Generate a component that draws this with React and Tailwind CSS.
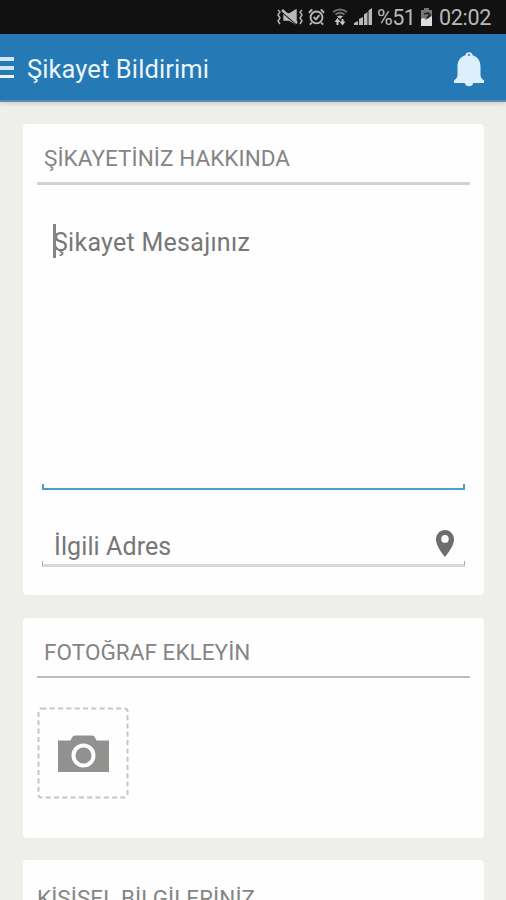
import React, { useState } from "react";

const App = () => {
  const [message, setMessage] = useState("");
  const [address, setAddress] = useState("");

  return (
    <div className="h-[900px] w-[506px] overflow-hidden bg-[#eeeeea] font-['Roboto',sans-serif]">
      <StatusBar />
      <Header />

      <main className="flex flex-col gap-[22px] pt-[22px] pr-[22px] pl-[23px]">
        {/* Complaint details */}
        <section className="h-[471px] rounded-[4px] bg-[#fefefe] px-[14px] pt-[10px]">
          <SectionTitle className="border-b-[3px] border-[#d2d2d2]">ŞİKAYETİNİZ HAKKINDA</SectionTitle>

          <div className="relative mx-[5px] mt-[20px] flex h-[285px] flex-col">
            <textarea
              value={message}
              placeholder="Şikayet Mesajınız"
              onChange={(e) => setMessage(e.target.value)}
              className="w-full flex-1 resize-none px-[11px] pt-[21px] text-[25px] leading-[34px] tracking-[0.27px] text-[#666] outline-none placeholder:text-[#777]"
            />
            <div className="h-[6px] border-x-2 border-b-[2px] border-[#509bc9]" />
            <span className="absolute top-[19px] left-[11px] h-[34px] w-[3px] bg-[#858585]" />
          </div>

          <div className="mx-[5px] mt-[33px]">
            <div className="flex h-[38px] items-end justify-between pr-[11px] pl-[12px]">
              <input
                value={address}
                placeholder="İlgili Adres"
                onChange={(e) => setAddress(e.target.value)}
                className="h-[34px] w-[330px] translate-y-[3px] text-[25px] leading-[34px] tracking-[0.1px] text-[#666] outline-none placeholder:text-[#777]"
              />
              <svg viewBox="5 2 14 20" preserveAspectRatio="none" className="mb-[4px] h-[27px] w-[18px] fill-[#6d6d6d]">
                <path d="M12 2C8.13 2 5 5.13 5 9c0 5.25 7 13 7 13s7-7.75 7-13c0-3.87-3.13-7-7-7zm0 9.500a2.900 2.900 0 0 1 0-5.800 2.900 2.900 0 0 1 0 5.800z" />
              </svg>
            </div>
            <div className="h-[6px] border-x border-b-[3px] border-x-[#aaa] border-b-[#d8d8d8]" />
          </div>
        </section>

        {/* Photo upload */}
        <section className="mt-px h-[220px] rounded-[4px] bg-[#fefefe] px-[14px] pt-[10px]">
          <SectionTitle className="border-b-2 border-[#bbb]">FOTOĞRAF EKLEYİN</SectionTitle>
          <button className="mt-[29px] flex size-[92px] items-center justify-center">
            <CameraIcon />
          </button>
        </section>

        {/* Personal info */}
        <section className="h-[220px] rounded-[4px] bg-[#fefefe] px-[14px] pt-[14px]">
          <h2 className="text-[22.5px] leading-[48px] tracking-[0.05px] whitespace-nowrap text-[#858585]">KİŞİSEL BİLGİLERİNİZ</h2>
        </section>
      </main>
    </div>
  );
};

const SectionTitle = ({ children, className }) => (
  <h2 className={`pl-[7px] text-[22.5px] leading-[48px] tracking-[0.05px] whitespace-nowrap text-[#858585] ${className}`}>{children}</h2>
);

const Header = () => (
  <header className="flex h-[68px] items-center border-b-2 border-[#5f8da8] bg-[#2579b5] shadow-[0_2px_4px_rgba(0,0,0,0.12)]">
    <div className="mt-px flex w-[14px] flex-col gap-[5px]">
      <span className="h-[4px] bg-[#d3e6f5]" />
      <span className="h-[4px] bg-[#d3e6f5]" />
      <span className="h-[3px] bg-[#eaf5fd]" />
    </div>
    <h1 className="mt-[5px] ml-[13px] flex-1 text-[25.5px] tracking-[0.1px] whitespace-nowrap text-[#eaf5fd]">Şikayet Bildirimi</h1>
    <svg viewBox="0 0 32 36" className="mt-[3px] mr-[21px] h-[36px] w-[32px] fill-[#deeffc]">
      <path d="M12.300 4.200a3.800 3.800 0 0 1 7.400 0c5.200 1.600 7.800 5.800 7.800 11.300v8.300c0 2.400 1.300 4.200 3.500 5.600V32H20.300a4.500 4.500 0 0 1-8.600 0H1v-2.600c2.200-1.400 3.500-3.200 3.500-5.600v-8.300c0-5.500 2.600-9.700 7.800-11.300z" />
      <circle cx="16" cy="4" r="1.300" fill="#5d9bca" />
    </svg>
  </header>
);

const StatusBar = () => (
  <div className="flex h-[34px] items-center bg-[#111] pl-[277px] text-[#b9b9b9]">
    {/* vibrate / muted */}
    <svg viewBox="0 0 26 18" className="h-[18px] w-[26px]" fill="none" stroke="currentColor" strokeWidth="1.400">
      <path d="M1 2l2 2-2 3 2 3-2 3 2 3M25 2l-2 2 2 3-2 3 2 3-2 3" />
      <path d="M7 6h5l7-4v14l-7-4H7z" fill="currentColor" />
      <path d="M6 5l14 12" stroke="#111" strokeWidth="1.500" />
      <path d="M5 2l15 13" strokeWidth="2.500" />
    </svg>
    {/* alarm */}
    <svg viewBox="0 0 18 18" className="ml-[5px] h-[18px] w-[17px]" fill="none" stroke="currentColor" strokeWidth="2">
      <circle cx="9" cy="9.500" r="6.300" />
      <path d="M1 4.500L4.500 1M17 4.500L13.500 1M4 15l-2 2M14 15l2 2M6 9l2.500 2.500L12 7" />
    </svg>
    {/* wifi */}
    <svg viewBox="0 0 16 18" className="ml-[7px] h-[18px] w-[16px]" fill="none">
      <path d="M1 4q7-5 14 0M3.500 6.500q4.500-3.500 9 0" stroke="#707070" strokeWidth="2" />
      <path d="M5 8.500q3-2 6 0L8 11z" fill="#bbb" />
      <path d="M5.500 17v-5M10.500 11v5" stroke="#c8c8c8" strokeWidth="2" />
      <path d="M2.500 14l3-4 3 4zM7.500 13.500h6l-3 4z" fill="#c8c8c8" />
    </svg>
    {/* signal */}
    <svg viewBox="0 0 18 18" className="ml-[6px] h-[18px] w-[18px]" fill="currentColor">
      <path d="M0 15l4-2v4H0zM5 11l4-2v8H5zM10 6.500l3.500-2.500v13H10zM14.500 2.500L18 0v17h-3.500z" />
    </svg>
    <span className="ml-[5px] w-[40px] pt-px text-[21.5px] leading-[33px] tracking-[-0.5px] whitespace-nowrap">%51</span>
    <svg viewBox="0 0 13 18" className="ml-[3px] h-[18px] w-[13px]">
      <path d="M4 0h5v2h3v16H1V2h3z" fill="#777" />
      <path d="M1 11l3-1 2 2 6-4v10H1z" fill="#dedede" />
      <path d="M4 6l4-1 2 2-3 3" fill="none" stroke="#222" strokeWidth="1.800" />
    </svg>
    <span className="ml-[6px] pt-px text-[21.5px] leading-[33px] tracking-[-0.3px] whitespace-nowrap">02:02</span>
  </div>
);

// Dashed frame is part of the icon so the dash rhythm stays fixed
const CameraIcon = () => (
  <svg viewBox="0 0 92 92" className="size-[92px]">
    <rect x="1.500" y="1.500" width="89" height="89" rx="3" fill="none" stroke="#c6c6c6" strokeWidth="2" strokeDasharray="5 3.300" />
    <path d="M21 33.500h12.500l1.500-3q1-2 3-2h17q2 0 3 2l1.500 3H72V65H21z" fill="#91918f" />
    <circle cx="46.500" cy="48.500" r="10" fill="none" stroke="#fefefe" strokeWidth="4" />
  </svg>
);

export default App;
